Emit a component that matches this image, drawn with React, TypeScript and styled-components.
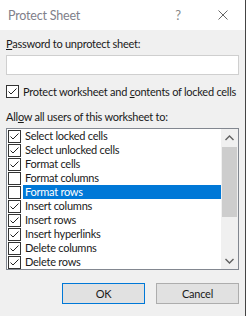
import styled, { createGlobalStyle } from 'styled-components';

const Global = createGlobalStyle`
  html, body { margin: 0; padding: 0; background: #f0f0f0; }
  * { box-sizing: border-box; }
`;

interface RowProps {
  selected?: boolean;
}

const items: { label: string; checked: boolean }[] = [
  { label: 'Select locked cells', checked: true },
  { label: 'Select unlocked cells', checked: true },
  { label: 'Format cells', checked: true },
  { label: 'Format columns', checked: false },
  { label: 'Format rows', checked: false },
  { label: 'Insert columns', checked: true },
  { label: 'Insert rows', checked: true },
  { label: 'Insert hyperlinks', checked: true },
  { label: 'Delete columns', checked: true },
  { label: 'Delete rows', checked: true },
];

function Check({ on }: { on: boolean }) {
  return (
    <Box>
      {on && (
        <svg width="11" height="11" viewBox="0 0 11 11">
          <path d="M1.5 5.5 L4 8 L9.5 2.5" fill="none" stroke="#222" strokeWidth="1" />
        </svg>
      )}
    </Box>
  );
}

export default function App() {
  return (
    <Window>
      <Global />
      <TitleBar>
        <Title>Protect Sheet</Title>
        <Help>?</Help>
        <Close>
          <svg width="10" height="10" viewBox="0 0 10 10">
            <path d="M0.5 0.5 L9.5 9.5 M9.5 0.5 L0.5 9.5" stroke="#666" strokeWidth="1" />
          </svg>
        </Close>
      </TitleBar>
      <Body>
        <Label>
          <u>P</u>assword to unprotect sheet:
        </Label>
        <PasswordInput />
        <CheckRow>
          <Check on={true} />
          <span>
            Protect worksheet and <u>c</u>ontents of locked cells
          </span>
        </CheckRow>
        <Label2>
          All<u>o</u>w all users of this worksheet to:
        </Label2>
        <ListBox>
          <Items>
            {items.map((it) => (
              <Row key={it.label}>
                <Check on={it.checked} />
                <RowText selected={it.label === 'Format rows'}>{it.label}</RowText>
              </Row>
            ))}
          </Items>
          <ScrollBar>
            <ArrowBtn>
              <svg width="9" height="6" viewBox="0 0 9 6">
                <path d="M0.5 5 L4.5 1 L8.5 5" fill="none" stroke="#606060" strokeWidth="1.4" />
              </svg>
            </ArrowBtn>
            <Track>
              <Thumb />
            </Track>
            <ArrowBtn>
              <svg width="9" height="6" viewBox="0 0 9 6">
                <path d="M0.5 1 L4.5 5 L8.5 1" fill="none" stroke="#606060" strokeWidth="1.4" />
              </svg>
            </ArrowBtn>
          </ScrollBar>
        </ListBox>
        <Buttons>
          <Button primary>OK</Button>
          <Button>Cancel</Button>
        </Buttons>
      </Body>
    </Window>
  );
}

const Window = styled.div`
  width: 246px;
  height: 316px;
  background: #f0f0f0;
  border-right: 1px solid #444;
  font-family: Lato, 'Liberation Sans', sans-serif;
  font-size: 11px;
  letter-spacing: -0.25px;
  color: #1a1a1a;
  overflow: hidden;
`;

const TitleBar = styled.div`
  height: 30px;
  background: #fff;
  display: flex;
  align-items: center;
  padding-left: 8px;
`;

const Title = styled.div`
  flex: 1;
  font-size: 12.5px;
  letter-spacing: -0.2px;
  color: #80808a;
`;

const Help = styled.div`
  width: 16px;
  font-size: 13px;
  color: #888;
  margin-right: 32px;
  text-align: center;
`;

const Close = styled.div`
  width: 10px;
  height: 10px;
  display: flex;
  margin-right: 17px;
`;

const Body = styled.div`
  padding: 6px 6px 0 6px;
  display: flex;
  flex-direction: column;
`;

const Label = styled.div`
  line-height: 16px;
  height: 16px;
  white-space: nowrap;
`;

const Label2 = styled(Label)`
  margin-top: 11px;
`;

const PasswordInput = styled.div`
  margin-top: 3px;
  height: 20px;
  background: #fff;
  border: 1px solid #cfcfcf;
`;

const CheckRow = styled.div`
  margin-top: 10px;
  height: 13px;
  display: flex;
  align-items: center;
  gap: 4px;
  white-space: nowrap;
  line-height: 13px;
`;

const Box = styled.div`
  width: 13px;
  height: 13px;
  flex: none;
  border: 1px solid #333;
  background: #fff;
  display: flex;
  align-items: center;
  justify-content: center;
`;

const ListBox = styled.div`
  margin-top: 3px;
  height: 142px;
  border: 1px solid #828790;
  background: #fff;
  display: flex;
`;

const Items = styled.div`
  flex: 1;
  display: flex;
  flex-direction: column;
  padding-left: 1px;
`;

const Row = styled.div`
  height: 14px;
  display: flex;
  align-items: center;
  white-space: nowrap;
`;

const RowText = styled.div<RowProps>`
  flex: 1;
  height: 14px;
  line-height: 14px;
  margin-left: 2px;
  padding-left: 2px;
  background: ${(p) => (p.selected ? '#0078d7' : 'transparent')};
  color: ${(p) => (p.selected ? '#fff' : '#1a1a1a')};
`;

const ScrollBar = styled.div`
  width: 17px;
  background: #f0f0f0;
  display: flex;
  flex-direction: column;
`;

const ArrowBtn = styled.div`
  height: 17px;
  display: flex;
  align-items: center;
  justify-content: center;
`;

const Track = styled.div`
  flex: 1;
  padding: 1px 1px 0 1px;
`;

const Thumb = styled.div`
  height: 70px;
  background: #cdcdcd;
`;

const Buttons = styled.div`
  margin-top: 13px;
  display: flex;
  justify-content: flex-end;
  gap: 11px;
`;

const Button = styled.div<{ primary?: boolean }>`
  width: 83px;
  height: 21px;
  background: #e1e1e1;
  border: 1px solid ${(p) => (p.primary ? '#0078d7' : '#adadad')};
  display: flex;
  align-items: center;
  justify-content: center;
`;
